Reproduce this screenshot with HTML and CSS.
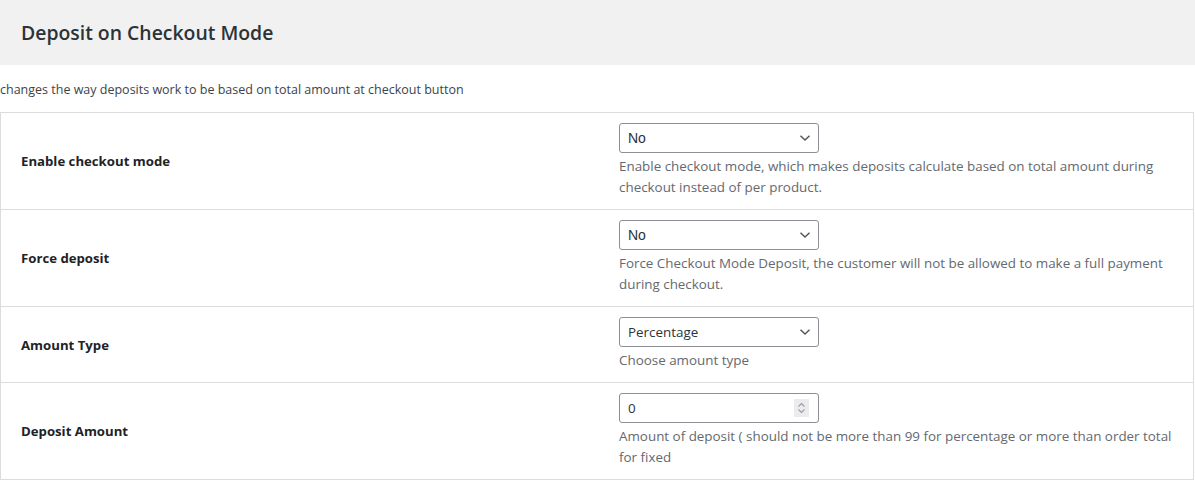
FILE: index.html
```html
<!DOCTYPE html>
<html>
<head>
<meta charset="utf-8">
<link rel="stylesheet" href="styles.css">
</head>
<body>
<div class="page">
  <div class="section-head"><h2 class="section-title">Deposit on Checkout Mode</h2></div>
  <p class="section-desc">changes the way deposits work to be based on total amount at checkout button</p>
  <table class="form-table">
    <tr class="row">
      <th class="label">Enable checkout mode</th>
      <td class="field">
        <div class="control">
          <select class="select"><option>No</option></select>
          <svg class="chev" width="12" height="8" viewBox="0 0 12 8"><path d="M1.5 1.8 L6 6 L10.5 1.8" fill="none" stroke="#50575e" stroke-width="1.5"/></svg>
        </div>
        <p class="desc">Enable checkout mode, which makes deposits calculate based on total amount during checkout instead of per product.</p>
      </td>
    </tr>
    <tr class="row">
      <th class="label">Force deposit</th>
      <td class="field">
        <div class="control">
          <select class="select"><option>No</option></select>
          <svg class="chev" width="12" height="8" viewBox="0 0 12 8"><path d="M1.5 1.8 L6 6 L10.5 1.8" fill="none" stroke="#50575e" stroke-width="1.5"/></svg>
        </div>
        <p class="desc">Force Checkout Mode Deposit, the customer will not be allowed to make a full payment during checkout.</p>
      </td>
    </tr>
    <tr class="row">
      <th class="label">Amount Type</th>
      <td class="field">
        <div class="control">
          <select class="select select-ub"><option>Percentage</option></select>
          <svg class="chev" width="12" height="8" viewBox="0 0 12 8"><path d="M1.5 1.8 L6 6 L10.5 1.8" fill="none" stroke="#50575e" stroke-width="1.5"/></svg>
        </div>
        <p class="desc">Choose amount type</p>
      </td>
    </tr>
    <tr class="row">
      <th class="label">Deposit Amount</th>
      <td class="field">
        <div class="control">
          <input class="number" type="number" value="0">
          <span class="spin">
            <svg width="15" height="18" viewBox="0 0 15 18"><path d="M4.5 7.5 L7.5 4.5 L10.5 7.5 M4.5 10.5 L7.5 13.5 L10.5 10.5" fill="none" stroke="#9a9ca0" stroke-width="1.1"/></svg>
          </span>
        </div>
        <p class="desc">Amount of deposit ( should not be more than 99 for percentage or more than order total for fixed</p>
      </td>
    </tr>
  </table>
</div>
</body>
</html>
```
FILE: styles.css
```css
html, body {
  margin: 0;
  padding: 0;
  background: #fff;
}
body {
  font-family: "Open Sans", "Noto Sans", sans-serif;
  color: #3c434a;
  width: 1195px;
  height: 480px;
  overflow: hidden;
}
.section-head {
  background: #f1f1f1;
  height: 65px;
  display: flex;
  align-items: center;
  padding-left: 21px;
}
.section-title {
  margin: 0;
  font-size: 19.4px;
  font-weight: 600;
  color: #2c3338;
}
.section-desc {
  margin: 0;
  padding-top: 16px;
  height: 47px;
  box-sizing: border-box;
  font-size: 12.5px;
  color: #3c434a;
}
.form-table {
  width: 1194px;
  table-layout: fixed;
  border-collapse: collapse;
  border: 1px solid #dcdcde;
}
.row {
  border-bottom: 1px solid #dcdcde;
}
.label {
  width: 588px;
  text-align: left;
  padding: 0 0 0 20px;
  font-size: 13.2px;
  font-weight: 700;
  color: #1d2327;
  vertical-align: middle;
}
.field {
  padding: 10px 10px 11px 10px;
  vertical-align: top;
}
.control {
  position: relative;
  width: 200px;
  height: 30px;
}
.select {
  appearance: none;
  -webkit-appearance: none;
  width: 200px;
  height: 30px;
  border: 1px solid #8c8f94;
  border-radius: 3px;
  background: #fff;
  padding: 0 24px 0 8px;
  font-family: "Liberation Sans", Arial, sans-serif;
  font-size: 14px;
  color: #2c3338;
  margin: 0;
}
.select-ub {
  font-family: "Open Sans", sans-serif;
  font-size: 13.4px;
}
.chev {
  position: absolute;
  right: 8px;
  top: 11px;
  pointer-events: none;
}
.number {
  display: block;
  box-sizing: border-box;
  width: 200px;
  height: 30px;
  border: 1px solid #8c8f94;
  border-radius: 3px;
  padding: 0 6px 0 8px;
  font-family: "Open Sans", sans-serif;
  font-size: 13.4px;
  color: #2c3338;
  margin: 0;
  -moz-appearance: textfield;
}
.number::-webkit-inner-spin-button,
.number::-webkit-outer-spin-button {
  -webkit-appearance: none;
  margin: 0;
}
.spin {
  position: absolute;
  right: 10px;
  top: 6px;
  width: 15px;
  height: 18px;
  background: #ececee;
  display: flex;
}
.desc {
  margin: 3px 0 0;
  font-size: 13.4px;
  line-height: 21px;
  color: #646970;
}
```
